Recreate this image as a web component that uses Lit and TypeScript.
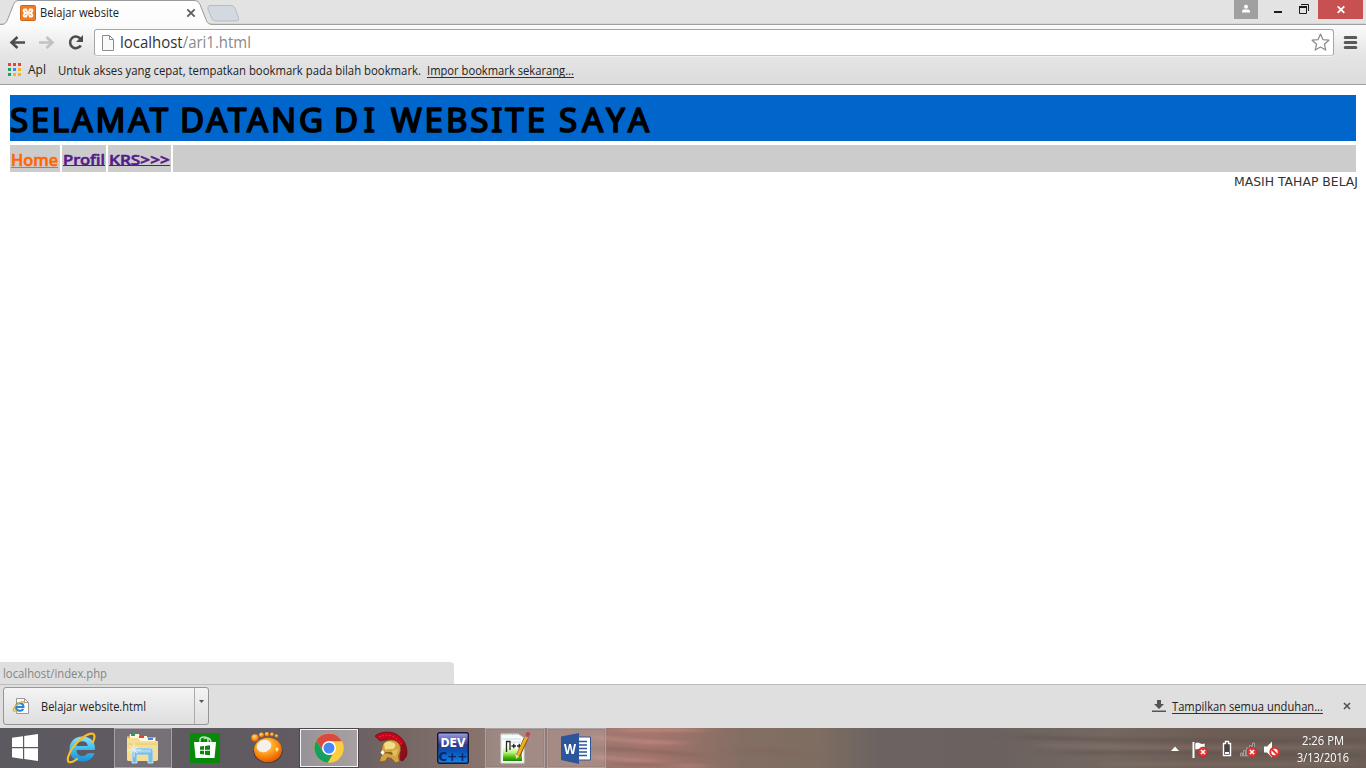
import { LitElement, html, svg, css } from 'lit';
import { customElement } from 'lit/decorators.js';

/** One line of text set to an exact width inside its own box. */
const line = (text: string, width: number, cls: string, height = 18, base = 13) => html`
  <svg class="line ${cls}" width=${width} height=${height}>
    <text x="0" y=${base} textLength=${width} lengthAdjust="spacingAndGlyphs">${text}</text>
  </svg>`;

const titleWords: [string, number, number][] = [
  ['SELAMAT', 0, 158], ['DATANG', 170, 143], ['DI', 324, 41], ['WEBSITE', 381, 154], ['SAYA', 549, 90],
];

const icons = {
  start: svg`<path fill="#fff" d="M0 3.800 11 2.200V13H0zM12.200 2 26 0v13H12.200zM0 14.200h11V25L0 23.300zM12.200 14.200H26V27l-13.800-1.900z"/>`,
  ie: svg`<defs><linearGradient id="ieb" x2="0" y2="1"><stop stop-color="#8be3fb"/><stop offset=".5" stop-color="#3dbcf0"/><stop offset="1" stop-color="#1d8fd0"/></linearGradient></defs>
    <path fill="url(#ieb)" fill-rule="evenodd" d="M29 18H10.500c.3 4 2.500 6 6 6 2.300 0 4-1 5-2.800h7C26.800 26.500 22.400 29.500 16.500 29.500 8.500 29.500 3.500 24.700 3.500 17.200S8.800 4.500 16.400 4.500C24.400 4.500 29.500 9.600 29 18zM10.600 14h11.200c-.3-3-2.300-4.700-5.400-4.700s-5.300 1.700-5.800 4.700z"/>
    <path fill="none" stroke="#f5bd2c" stroke-width="2.200" stroke-linecap="round" d="M27 10c1.800-4 2.300-7.500-.4-8.300C22 .6 12 8 6.500 16 2.500 22 .3 28.500 3 30c1.700.8 4.800-.5 8-3"/>`,
  folder: svg`<path fill="#d9ad4e" d="M1 3h2l1-2h9l1 3h16v22a2 2 0 0 1-2 2H3a2 2 0 0 1-2-2z"/>
    <path fill="#fff7df" d="M4 1h9v5H4zM13 3h8v5h-8zM20 5h9v4h-9z"/>
    <path fill="#1ba55b" d="M5 1h4v2H5z"/><path fill="#d94436" d="M13 3h5v2h-5z"/><path fill="#3f86d6" d="M22 5h5v2h-5z"/>
    <path fill="#f5dd91" d="M1 5h11l2 3h18v18a2 2 0 0 1-2 2H3a2 2 0 0 1-2-2z"/><path stroke="#ddb964" d="M2 11h29" opacity=".5"/>
    <path fill="#7dbbe0" stroke="#bfe4f7" d="M6 30V18q0-3 3-3h15q3 0 3 3v12h-5v-8H11v8z"/><path fill="#a9d9f0" d="M8 16.500h17v3H8z"/>
    <path stroke="#fff" stroke-width="1" d="M8 10v14M1 17h14M4.500 13.500l7 7M11.500 13.500l-7 7" opacity=".75"/>`,
  store: svg`<path fill="#078a07" d="M0 0h30v30H0z"/><path fill="none" stroke="#bfe3bf" stroke-width="1.500" d="M10 10V7q0-3 4-3t4 3v3M14 6q2-2 4-1 3 1 3 5"/>
    <path fill="#fff" d="M4 9h22l-1.500 16h-19z"/><path fill="#078a07" d="m10 13.500 4-.5v3.800h-4zm5-.6 5-.6v4.500h-5zM10 17.800h4v3.800l-4-.5zm5 0h5v4.500l-5-.6z"/>`,
  gom: svg`<defs><radialGradient id="gom" cx=".4" cy=".3" r=".75"><stop stop-color="#ffd879"/><stop offset=".5" stop-color="#ff9b17"/><stop offset="1" stop-color="#dc4f02"/></radialGradient></defs>
    <ellipse cx="17" cy="19" rx="14.500" ry="12" fill="#3d302c"/><ellipse cx="17" cy="18" rx="14" ry="12.300" fill="url(#gom)"/>
    <circle cx="4" cy="6" r="3.700" fill="url(#gom)"/><circle cx="10.500" cy="3" r="2.500" fill="url(#gom)"/><circle cx="16" cy="2.300" r="2.200" fill="url(#gom)"/><circle cx="21" cy="2.500" r="2" fill="url(#gom)"/><circle cx="25.500" cy="4" r="1.800" fill="url(#gom)"/>
    <ellipse cx="13" cy="14" rx="7.500" ry="6" fill="#f4f1ec" transform="rotate(-20 13 14)"/><path fill="#ffe28a" d="m24 17 2-2 2 2-2 3z"/>`,
  chrome: svg`<circle cx="15" cy="15" r="14.700" fill="#fdcd40"/>
    <path fill="#db4a3e" d="M2.300 7.600A14.700 14.700 0 0 1 28 8.300H15L9 18z"/>
    <path fill="#16a05d" d="M2.300 7.600 9.200 18.500 15 21.700h3.400l-4.700 8A14.700 14.700 0 0 1 2.300 7.600z"/>
    <circle cx="15" cy="15" r="7" fill="#fff"/><circle cx="15" cy="15" r="5.500" fill="#4688f4"/>`,
  helmet: svg`<path fill="#c4061a" stroke="#6d0f19" stroke-width=".8" d="M0 4C5-.5 17-2 24 4c7 5 9 14 7.500 20l-4 5-2.500-1c1-8 0-13-4-16C17 8 11 7 5 9z"/>
    <path stroke="#ee3b48" stroke-dasharray="1.500 2" fill="none" d="M4 5c7-3 14-2 19 3 4 4 6 9 6 14"/>
    <path fill="#560d18" d="M25 14c2 4 2 8 1 14l2.500.5 3-4.500c.5-5-1-10-3-13z" opacity=".5"/>
    <path fill="#d3a344" stroke="#815b21" stroke-width=".8" d="M7 16c0-5 4-8 9-8 5.500 0 9.500 3.500 9.500 9 0 3-1.500 5-2 7l1 5.500-4 1.500-4-4.500-4-1-2 3.500-6 1 1-5 2-2-2-2z"/>
    <path fill="#f5dc86" d="M9 12c2-3.500 8-3.500 11 0 1 2 0 4-2 5l-8 .5z"/><path fill="#e4bd5c" d="M17 19l6-2-2 7-4-1z"/><path fill="#8a6123" d="M10 20h6l2 1.500-1 1.500-4-1.500H9z"/><path fill="#fff" d="m7.500 18 2 2.500-2 2.500-2-2.500z"/>`,
  dev: svg`<defs><linearGradient id="dev" x2="0" y2="1"><stop stop-color="#a2a3e5"/><stop offset=".4" stop-color="#32388f"/><stop offset=".6" stop-color="#0754b5"/><stop offset="1" stop-color="#1485ee"/></linearGradient></defs>
    <rect x=".7" y=".7" width="30.600" height="30.600" rx="2" fill="url(#dev)" stroke="#141932" stroke-width="1.400"/>
    <text x="3.500" y="15" textLength="25" lengthAdjust="spacingAndGlyphs" class="dev1">DEV</text><text x="1.500" y="28.500" textLength="29" lengthAdjust="spacingAndGlyphs" class="dev2">C++</text>`,
  npp: svg`<defs><linearGradient id="npp" x2="0" y2="1"><stop offset=".4" stop-color="#fff"/><stop offset=".65" stop-color="#baf17d"/><stop offset=".85" stop-color="#44b802"/><stop offset="1" stop-color="#158904"/></linearGradient></defs>
    <path fill="#f7fbf5" stroke="#d8ded6" d="M1 2h17l6 4v25H1z"/><path fill="url(#npp)" d="M3 5h19v24H3z"/><path stroke="#aebfce" stroke-dasharray="1 1.500" stroke-width="2" d="M2 2h17"/>
    <path stroke="#b9d7e9" d="M3 7h18M11 10h10"/><path fill="none" stroke="#20291d" stroke-width="1.300" d="M6.500 20V9.500h3.500V18M11.500 14h4.500m-2.250-2.200v4.500M17 14h4.500m-2.250-2.200v4.500"/>
    <path stroke="#775110" stroke-width="4.500" d="m18 24 9-20"/><path stroke="#f4ae1c" stroke-width="3" d="m18 23 9-19"/><path stroke="#9ba7b4" stroke-width="4" d="m26 6 1-2.500"/><path stroke="#bd4750" stroke-width="4" stroke-linecap="round" d="m27.500 3 .5-1"/><path fill="#f4d7a1" d="m15.500 22 4 2-3.500 3z"/>`,
  word: svg`<path fill="#fff" stroke="#2b579a" d="M17 4h12.500v23H17z"/><path stroke="#2b579a" stroke-width="1.500" d="M18 8.500h8M18 12h8M18 15.500h8M18 19h8M18 22.500h8"/>
    <path fill="#2b579a" d="M0 3.500 18 0v31L0 27z"/><text x="3" y="20.500" textLength="12" lengthAdjust="spacingAndGlyphs" class="w">W</text>`,
};

const tasks: [keyof typeof icons, string, number, number][] = [
  ['start', 's0', 26, 27], ['ie', 's1', 31, 32], ['folder', 's2', 33, 32], ['store', 's3', 30, 30],
  ['gom', 's4', 32, 32], ['chrome', 's5', 30, 30], ['helmet', 's6', 34, 32], ['dev', 's7', 32, 32],
  ['npp', 's8', 30, 32], ['word', 's9', 31, 31],
];

@customElement('app-root')
export class AppRoot extends LitElement {
  static styles = css`
    :host { display: flex; flex-direction: column; width: 1366px; height: 768px; overflow: hidden; background: #fff; font-family: "Noto Sans", "Open Sans", sans-serif; }
    * { box-sizing: border-box; }
    svg { display: block; flex: none; overflow: visible; }
    .line text { font: 12px "Open Sans", "Noto Sans", sans-serif; fill: #222; }
    .strip { height: 25px; flex: none; display: flex; justify-content: space-between; background: linear-gradient(#e3e3e3 23px, #d6d6d6 23px, #d6d6d6 24px, #a0a0a0 24px); }
    .caption { display: flex; height: 19px; padding-right: 3px; }
    .caption > div { display: grid; place-items: center; }
    .user { width: 24px; background: #a0a0a0; }
    .min { width: 40px; }
    .max { width: 20px; }
    .max svg { margin: 0 8px 1px 0; }
    .close { width: 45px; background: #c75050; }
    .chrome { height: 60px; flex: none; background: linear-gradient(#fbfbfb, #e5e5e5 50%, #dcdcdc); border-bottom: 1px solid #a0a0a0; padding-top: 4px; }
    .tools { display: flex; height: 27px; align-items: center; }
    .omni { width: 1240px; height: 27px; border: 1px solid #a5a5a5; border-bottom-color: #c4c4c4; border-radius: 3px; background: #fff; display: flex; align-items: center; box-shadow: 0 1px 0 #f1f1f1; padding: 0 3px 0 7px; }
    .omni .doc { margin-right: 6px; }
    .omni .star { margin-left: auto; }
    .url text { font-size: 15.500px; fill: #333; }
    .url .path { fill: #8a8a8a; }
    .menu { margin-left: 10px; }
    .marks { display: flex; padding: 5px 0 0 8px; height: 27px; }
    .marks .apps { margin-top: 2px; margin-right: 7px; }
    .marks .apl { margin-right: 12px; }
    .marks .hint { margin-right: 6px; margin-top: 1px; }
    .marks .imp { margin-top: 1px; }
    .u { border-bottom: 1px solid #333; }
    .marks .u { height: 16px; }
    .page { flex: 1; min-height: 0; padding: 10px 8px 0 10px; display: flex; flex-direction: column; }
    .banner { height: 46px; width: 1346px; background: #0066cc; margin: 0 0 4px; flex: none; }
    .banner text { font: 400 33px "Comic Sans MS", "Noto Sans", sans-serif; fill: #000; stroke: #000; stroke-width: 1.700px; stroke-linejoin: round; }
    .links { display: flex; gap: 2px; height: 27px; width: 1346px; flex: none; }
    .links > div { background: #ccc; padding: 0 0 0 1px; }
    .c1 { width: 50px; } .c2 { width: 44px; } .c3 { width: 63px; } .c4 { flex: 1; }
    .link text { font: 500 15px "Comic Sans MS", "Noto Sans", sans-serif; fill: #551a8b; stroke: #551a8b; stroke-width: .6px; stroke-linejoin: round; }
    .link.home text { font-size: 17px; fill: #ff6600; stroke: #ff6600; }
    .ul { height: 21px; border-bottom: 1px solid #551a8b; }
    .c1 .ul { width: 47px; height: 23px; border-bottom: 1px solid #ff6600; }
    .c2 .ul { width: 42px; } .c3 .ul { width: 61px; }
    .marquee { overflow: hidden; height: 18px; padding-left: 1224px; width: 1348px; }
    .marquee text { font: 12px "DejaVu Sans", sans-serif; fill: #333; }
    .status { margin: auto 0 0 -10px; width: 454px; height: 22px; background: #dfdfdf; border-radius: 0 4px 0 0; padding: 3px; }
    .status text { fill: #858585; }
    .shelf { height: 44px; flex: none; background: #dfdfdf; border-top: 1px solid #bcbcbc; display: flex; padding: 2px 14px 0 3px; }
    .item { width: 206px; height: 38px; border: 1px solid #969696; border-radius: 3px; background: linear-gradient(#f4f4f4, #dedede); display: flex; padding-left: 9px; align-items: center; }
    .item .name { margin: 2px 0 0 12px; }
    .drop { width: 14px; height: 36px; border-left: 1px solid #ababab; margin-left: auto; padding: 12px 0 0 4px; }
    .all { margin-left: auto; display: flex; padding-top: 11px; }
    .all .u { height: 16px; margin: 0 20px 0 6px; }
    .all .arrow { margin-top: 1px; }
    .bar { height: 40px; flex: none; display: flex; position: relative; overflow: hidden; background: linear-gradient(90deg, #5d5961 0, #625b61 320px, #7c6b67 430px, #927871 520px, #9c7770 600px, #a5756b 650px, #8f7066 710px, #846e64 740px, #7e6d61 820px, #6a6361 880px, #6b625f 1000px, #746861 1110px, #6d5d55 1210px, #6b5d57 1366px); }
    .wood { position: absolute; inset: 0; }
    .task { position: relative; height: 40px; flex: none; border: 1px solid transparent; padding-top: 3px; }
    .s0 { width: 60px; padding: 5px 0 0 11px; } .s1 { width: 54px; padding-left: 5px; } .s2 { width: 58px; padding: 4px 0 0 11px; } .s3 { width: 62px; padding: 4px 0 0 17px; } .s4 { width: 65px; padding-left: 16px; } .s5 { width: 60px; padding: 4px 0 0 14px; } .s6 { width: 64px; padding-left: 15px; } .s7 { width: 62px; padding-left: 13px; } .s8 { width: 60px; padding-left: 14px; } .s9 { width: 59px; padding: 4px 0 0 13px; }
    .s2, .s8, .s9 { border-color: #aaa1a2; background: rgba(255,255,255,.14); box-shadow: inset 0 0 0 1px rgba(100,90,90,.15); }
    .s5 { border: 1px solid #4a474c; box-shadow: inset 0 0 0 1px #f2f2f2; background: linear-gradient(90deg, #969398, #a8a0a2); }
    .s8 { margin-right: 2px; }
    .dev1 { font: bold 12px "DejaVu Sans", sans-serif; fill: #fff; } .dev2 { font: bold 13px "DejaVu Sans", sans-serif; fill: #0a2760; }
    .w { font: bold 15px "Open Sans", sans-serif; fill: #fff; }
    .tray { position: relative; margin-left: auto; display: flex; padding-right: 16px; gap: 17px; }
    .clock { width: 54px; display: flex; flex-direction: column; align-items: center; padding-top: 4px; }
    .clock text { fill: #fff; }
  `;

  render() {
    return html`
      <div class="strip">
        <svg width="245" height="25">
          <defs><linearGradient id="tab" x2="0" y2="1"><stop stop-color="#fff"/><stop offset="1" stop-color="#fbfbfb"/></linearGradient></defs>
          <path d="M0 24.500c5 0 6-1 8-6l5.500-14Q15 .5 18 .5h177q3.500 0 5 4l6 15c1.500 4 3 5 8 5V26H0z" fill="url(#tab)"/>
          <path d="M0 24.500c5 0 6-1 8-6l5.500-14Q15 .5 18 .5h177q3.500 0 5 4l6 15c1.500 4 3 5 8 5" fill="none" stroke="#999"/>
          <path d="M210 5.500h21q3 0 4 3l3.500 9q1 3.500-2 3.500h-21q-3 0-4-3l-3.500-9q-1-3.500 2-3.500z" fill="#d3d9e0" stroke="#b9bbbd"/>
          <rect x="20.500" y="5.500" width="15" height="15" rx="1" fill="#f47c20" stroke="#c8651f"/>
          <path d="M24.500 8.500h2l1.500 2 1.500-2h2q1.800 0 1.800 2T31.800 13q1.500.5 1.500 2.500t-1.800 2h-2l-1.500-2-1.500 2h-2q-1.800 0-1.800-2T24.200 13q-1.500-.5-1.500-2.500t1.800-2z" fill="#fff"/>
          <path d="M28 8v3.500M28 18v-3.500M24.800 10.500l1.700 1.700M31.200 10.500l-1.700 1.700M24.800 15.500l1.700-1.700M31.200 15.500l-1.700-1.700" stroke="#f47c20"/>
          <text x="40" y="17" textLength="79" lengthAdjust="spacingAndGlyphs" font-family="Open Sans" font-size="12" fill="#222">Belajar website</text>
          <path d="m187.300 9.300 7.400 7.400m0-7.400-7.400 7.400" stroke="#5c5c5c" stroke-width="1.800"/>
        </svg>
        <div class="caption">
          <div class="user"><svg width="8" height="10"><circle cx="4" cy="1.700" r="2" fill="#fff"/><path d="M0 7.500V6.500Q0 4.500 2 4.500h4q2 0 2 2v1z" fill="#fff"/></svg></div>
          <div class="min"><svg width="8" height="7"><path fill="#1c1c1c" d="M0 5h8v2H0z"/></svg></div>
          <div class="max"><svg width="10" height="10"><path d="M2 .5h7.500V7M.5 3h7v6.500h-7z" fill="none" stroke="#1c1c1c"/><path d="M0 2h8v2H0z" fill="#1c1c1c"/></svg></div>
          <div class="close"><svg width="8" height="8"><path d="m.7.300 6.600 6.600m0-6.600L.7 6.900" stroke="#fff" stroke-width="1.800"/></svg></div>
        </div>
      </div>
      <div class="chrome">
        <div class="tools">
          <svg width="94" height="27">
            <path d="M25 13.500H12m5.500-5.500-6 5.500 6 5.500" fill="none" stroke="#4d4d4d" stroke-width="2.600"/>
            <path d="M39 13.500h13m-5.500-5.500 6 5.500-6 5.500" fill="none" stroke="#c2c2c2" stroke-width="2.600"/>
            <path d="M80.300 9.600a5.800 5.800 0 1 0 .5 6.900" fill="none" stroke="#4d4d4d" stroke-width="2.500"/><path d="M83 6v7h-7z" fill="#4d4d4d"/>
          </svg>
          <div class="omni">
            <svg class="doc" width="12" height="16"><path d="M.5.500h7l4 4v11H.5z" fill="#f9f9f9" stroke="#8c8c8c"/><path d="M7.500.500v4h4" fill="none" stroke="#8c8c8c"/></svg>
            <svg class="line url" width="132" height="22"><text x="0" y="16" textLength="131" lengthAdjust="spacingAndGlyphs">localhost<tspan class="path">/ari1.html</tspan></text></svg>
            <svg class="star" width="19" height="18"><path d="m9.500 0 2.400 5.600 6 .6-4.500 4 1.400 5.900-5.300-3.100-5.300 3.100 1.400-5.900-4.500-4 6-.6z" fill="#fff" stroke="#8a8a8a" stroke-width="1.200" stroke-linejoin="round"/></svg>
          </div>
          <svg class="menu" width="13" height="13"><path d="M1.200 1.500h10.600M1.200 6.500h10.600M1.200 11.500h10.600" stroke="#5a5a5a" stroke-width="3" stroke-linecap="round"/></svg>
        </div>
        <div class="marks">
          <svg class="apps" width="13" height="13">${['#e8413c', '#e8413c', '#e8413c', '#1ba261', '#4285f4', '#f9b320', '#1ba261', '#f9b320', '#f9b320'].map((c, i) => svg`<rect x=${(i % 3) * 5} y=${Math.floor(i / 3) * 5} width="3" height="3" fill=${c}/>`)}</svg>
          <div class="apl">${line('Apl', 18, '')}</div>
          <div class="hint">${line('Untuk akses yang cepat, tempatkan bookmark pada bilah bookmark.', 363, '')}</div>
          <div class="imp u">${line('Impor bookmark sekarang...', 147, '')}</div>
        </div>
      </div>
      <div class="page">
        <div class="banner"><svg width="1346" height="46">${titleWords.map(([t, x, w]) => svg`<text x=${x} y="37" textLength=${w} lengthAdjust="spacing">${t}</text>`)}</svg></div>
        <div class="links">
          <div class="c1"><div class="ul">${line('Home', 47, 'link home', 22, 21)}</div></div>
          <div class="c2"><div class="ul">${line('Profil', 42, 'link', 22, 20)}</div></div>
          <div class="c3"><div class="ul">${line('KRS>>>', 61, 'link', 22, 20)}</div></div>
          <div class="c4"></div>
        </div>
        <div class="marquee">${line('MASIH TAHAP BELAJ', 124, '', 18, 14)}</div>
        <div class="status">${line('localhost/index.php', 104, '')}</div>
      </div>
      <div class="shelf">
        <div class="item">
          <svg width="16" height="16"><path d="M3.500.500h8l4 4v11h-12z" fill="#fafafa" stroke="#9a9a9a"/><path d="M11.500.500v4h4" fill="none" stroke="#9a9a9a"/><path d="M3 9h7.500c0-5-7.500-5-7.500 0s6 4.500 7.300 2" fill="none" stroke="#2385d5" stroke-width="2"/><path d="M11 5.500C12 2 6 4 2.500 8S-.2 14.500 4 12.500" fill="none" stroke="#e8ae32" stroke-width="1.200"/></svg>
          <div class="name">${line('Belajar website.html', 105, '')}</div>
          <div class="drop"><svg width="5" height="3"><path d="M0 0h5L2.500 3z" fill="#555"/></svg></div>
        </div>
        <div class="all">
          <svg class="arrow" width="14" height="14"><path d="M5 1h4v4h3L7 10 2 5h3zM0 11.500h14v1.500H0z" fill="#555"/></svg>
          <div class="u">${line('Tampilkan semua unduhan...', 151, '')}</div>
          <svg width="9" height="16"><path d="m1 5 6 6m0-6-6 6" stroke="#555" stroke-width="1.700"/></svg>
        </div>
      </div>
      <div class="bar">
        <svg class="wood" width="1366" height="40"><defs><filter id="soft" x="-10%" y="-200%" width="120%" height="500%"><feGaussianBlur stdDeviation="12 1.500"/></filter></defs>
          <g filter="url(#soft)" fill="none" stroke-width="3"><path d="M590 8q50 7 90 7M590 28q50 5 110 11M620 2h80" stroke="#ca9189" opacity=".7"/><path d="M590 20q60 2 110 8M620 36h60M745 22q30 0 50 5" stroke="#806158" opacity=".7"/><path d="M1020 9q120 5 346 3M1060 25q130-2 306 3" stroke="#5b4f4b" opacity=".55"/><path d="M1040 17q100 4 326 2M1110 36h240" stroke="#8d7a72" opacity=".45"/></g>
        </svg>
        ${tasks.map(([k, c, w, h]) => html`<div class="task ${c}"><svg width=${w} height=${h}>${icons[k]}</svg></div>`)}
        <div class="tray">
          <svg width="110" height="40">
            <path d="m2 23 4-4.500 4 4.500z" fill="#fff"/>
            <path d="M24.500 14v16" stroke="#fff" stroke-width="2"/><path d="M26 15q3-1.500 5 0t5 0v7q-3 1.500-5 0t-5 0z" fill="#fff" stroke="#444" stroke-width=".5"/>
            <path d="M54.500 15.500h2v-2h3v2h2v12h-7z" fill="#4c4341" stroke="#fff" stroke-width="1.400"/><path d="M56 24h4v2h-4z" fill="#fff"/>
            <path d="M71.500 25h2v3h-2zM74.500 22.500h2V28h-2zM77.500 20h2v8h-2zM80.500 17.500h2V28h-2zM83.500 15h2v13h-2z" fill="#6b605c" stroke="#bdb5b2" stroke-width=".7"/>
            <path d="M95 18.500h3l5-5v16l-5-5h-3z" fill="#fff"/>
            ${[[34, 24], [83, 24]].map(([x, y]) => svg`<g transform="translate(${x} ${y})"><circle r="4.900" fill="#dd3936" stroke="#b51f22" stroke-width=".6"/><path d="m-2-2 4 4m0-4-4 4" stroke="#fff" stroke-width="1.500"/></g>`)}
            <circle cx="105.500" cy="24" r="4.200" fill="#fff" stroke="#df3330" stroke-width="2"/><path d="m102.500 21 6 6" stroke="#df3330" stroke-width="1.900"/>
          </svg>
          <div class="clock">${line('2:26 PM', 42, '', 17, 13)}${line('3/13/2016', 52, '', 17, 13)}</div>
        </div>
      </div>`;
  }
}
